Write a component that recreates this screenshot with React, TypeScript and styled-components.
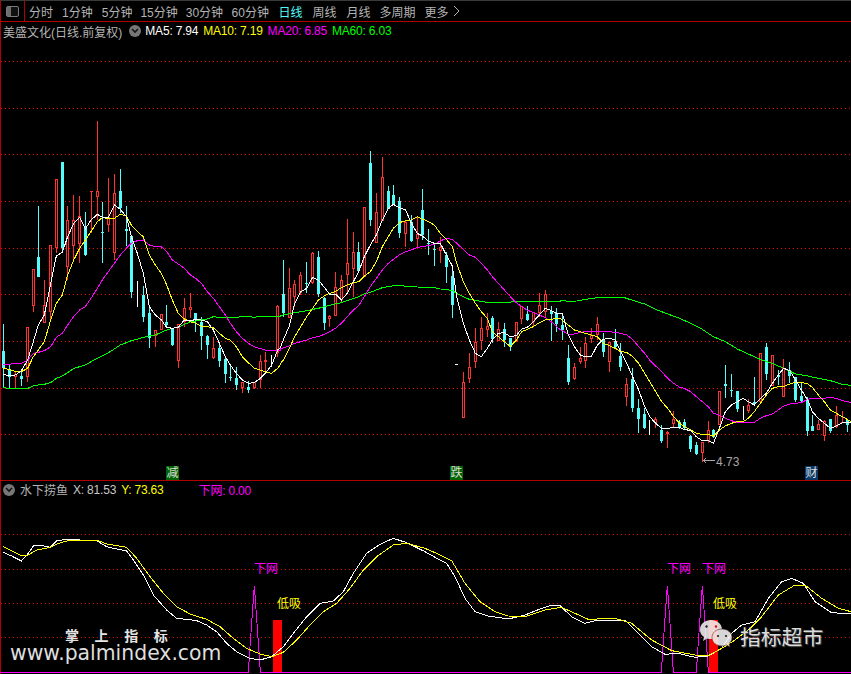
import styled, { createGlobalStyle } from "styled-components";

const GlobalStyle = createGlobalStyle`
  html, body {
    margin: 0;
    background: #000;
  }
`;

const UI_FONT = `"Liberation Sans", "Noto Sans CJK SC", sans-serif`;

const Page = styled.div`
  position: relative;
  display: flex;
  flex-direction: column;
  width: 851px;
  height: 674px;
  overflow: hidden;
  background: #000;
  box-shadow: inset 1px 0 0 #b00000;
  font-family: ${UI_FONT};
  font-size: 12px;
`;

const Toolbar = styled.div`
  display: flex;
  align-items: center;
  flex: none;
  height: 21px;
  box-sizing: border-box;
  border-top: 1px solid #3a3a3a;
  color: #b4b4b4;
`;

const ToggleCell = styled.div`
  display: flex;
  align-items: center;
  justify-content: center;
  width: 24px;
  height: 100%;
  border-right: 1px solid #b00000;
`;

const ToggleIcon = styled.span`
  display: block;
  width: 11px;
  height: 9px;
  border: 1px solid #7c7c7c;
  border-radius: 2px;
  background: linear-gradient(90deg, #6e6e6e 0 4px, #111 4px);
`;

const PeriodList = styled.div`
  display: flex;
  align-items: center;
  margin-left: 4px;
`;

const Period = styled.span<{ $active?: boolean; $gap: number }>`
  color: ${(p) => (p.$active ? "#54fcfc" : "#b4b4b4")};
  margin-left: ${(p) => p.$gap}px;
  white-space: nowrap;
`;

const MoreArrow = styled.svg`
  display: block;
  margin-left: 4px;
`;

const Panel = styled.section<{ $height: number }>`
  position: relative;
  flex: none;
  height: ${(p) => p.$height}px;
`;

const MainPanel = styled(Panel)`
  border-top: 1px solid #b00000;
  border-bottom: 1px solid #b00000;
`;

const LegendRow = styled.div<{ $height: number }>`
  display: flex;
  align-items: center;
  gap: 5px;
  height: ${(p) => p.$height}px;
  padding-left: 3px;
  white-space: nowrap;
`;

const LegendName = styled.span`
  color: #b4b4b4;
`;

const LegendValue = styled.span<{ $color: string; $gap?: number }>`
  color: ${(p) => p.$color};
  margin-left: ${(p) => p.$gap ?? 0}px;
  letter-spacing: -0.2px;
`;

const DropDot = styled.span<{ $gap?: number }>`
  display: inline-flex;
  align-items: center;
  justify-content: center;
  width: 12px;
  height: 12px;
  flex: none;
  border-radius: 50%;
  background: #777;
  color: #111;
  margin-left: ${(p) => p.$gap ?? 0}px;
`;

const Chart = styled.svg<{ $height: number }>`
  display: block;
  width: 851px;
  height: ${(p) => p.$height}px;
`;

const Grid = styled.line<{ $dim?: boolean }>`
  stroke: ${(p) => (p.$dim ? "#e00000" : "#ff0000")};
  stroke-width: 1;
  stroke-dasharray: 1 3;
  shape-rendering: crispEdges;
`;

const Curve = styled.polyline<{ $color: string }>`
  fill: none;
  stroke: ${(p) => p.$color};
  stroke-width: 1;
  shape-rendering: crispEdges;
`;

const Tag = styled.span<{ $x: number; $bg: string }>`
  position: absolute;
  left: ${(p) => p.$x}px;
  bottom: 0;
  width: 13px;
  height: 14px;
  line-height: 14px;
  text-align: center;
  background: ${(p) => p.$bg};
  color: #ddd;
`;

const Note = styled.span<{ $x: number; $y: number; $color: string }>`
  position: absolute;
  left: ${(p) => p.$x}px;
  top: ${(p) => p.$y}px;
  color: ${(p) => p.$color};
  line-height: 14px;
  white-space: nowrap;
`;

const PalmTitle = styled.div`
  position: absolute;
  left: 65px;
  top: 628px;
  color: #e4e4e4;
  font-family: "Noto Sans CJK SC", sans-serif;
  font-size: 14px;
  font-weight: 700;
  line-height: 14px;
  letter-spacing: 15.6px;
  white-space: nowrap;
`;

const PalmUrl = styled.div`
  position: absolute;
  left: 10px;
  top: 643px;
  color: #dedede;
  font-family: "DejaVu Sans", sans-serif;
  font-size: 20.4px;
  line-height: 20px;
  white-space: nowrap;
`;

const ShopMark = styled.div`
  position: absolute;
  left: 699px;
  top: 620px;
  display: flex;
  align-items: center;
  gap: 5px;
  height: 32px;
`;

const ShopName = styled.span`
  color: #dcdcdc;
  font-family: "Noto Sans CJK SC", sans-serif;
  font-size: 20.8px;
  line-height: 28px;
  text-shadow: 1px 1px 1px #555;
  white-space: nowrap;
`;

type Pt = [number, number];
type Kind = "r" | "c" | "w";
// x, high, body top, body bottom, low, in 3x crop coordinates
type Bar = [number, number, number, number, number, Kind];

const crop = (ox: number, oy: number, pts: Pt[]): string =>
  pts.map(([x, y]) => `${ox + x / 3},${oy + y / 3}`).join(" ");

const barsLeft: Bar[] = [
  [10, 612, 692, 745, 805, "c"], [28, 735, 750, 770, 805, "c"], [46, 755, 762, 770, 808, "r"],
  [64, 755, 768, 777, 798, "c"], [83, 620, 622, 772, 785, "r"], [100, 447, 448, 557, 575, "r"],
  [115, 258, 410, 470, 470, "c"], [133, 480, 555, 608, 608, "r"], [152, 375, 376, 577, 605, "r"],
  [169, 178, 178, 385, 400, "r"], [187, 126, 126, 385, 395, "c"], [203, 258, 300, 440, 480, "r"],
  [221, 225, 300, 377, 420, "r"], [239, 228, 287, 372, 428, "r"], [256, 276, 325, 405, 407, "c"],
  [273, 213, 213, 215, 340, "r"], [292, 3, 213, 230, 300, "r"], [307, 245, 337, 339, 430, "c"],
  [325, 175, 290, 314, 335, "r"], [343, 163, 220, 398, 420, "r"], [361, 148, 212, 265, 280, "c"],
  [379, 258, 327, 332, 378, "c"], [394, 347, 347, 515, 535, "c"], [412, 483, -1, -1, 560, "w"],
  [430, 498, 525, 590, 605, "c"], [448, 565, 578, 653, 683, "c"], [466, 630, 630, 647, 680, "r"],
  [484, 582, 583, 630, 630, "r"], [500, 555, 605, 615, 625, "c"], [517, 625, 628, 675, 678, "c"],
  [535, 612, 612, 722, 745, "r"], [553, 533, 565, 605, 620, "r"], [571, 518, 561, 569, 595, "r"],
  [587, 578, 578, 600, 635, "c"], [604, 592, 605, 648, 690, "c"], [622, 645, 648, 675, 717, "c"],
  [640, 650, 684, 715, 717, "r"], [658, 670, 684, 722, 740, "c"], [676, 715, 717, 762, 788, "c"],
  [691, 735, 771, 774, 783, "c"], [709, 740, 773, 795, 810, "c"], [727, 787, 787, 805, 820, "r"],
  [745, 782, 800, 810, 820, "c"], [763, 785, 787, 805, 808, "r"], [781, 705, 722, 780, 803, "r"],
  [796, 695, 720, 725, 760, "r"], [815, 705, -1, -1, 740, "w"], [833, 555, 557, 700, 710, "r"],
];

const barsMiddle: Bar[] = [
  [10, 360, 462, 520, 530, "c"], [28, 385, 445, 535, 535, "r"], [44, 420, 433, 472, 500, "r"],
  [62, 397, 405, 460, 465, "r"], [80, 365, 430, 432, 460, "c"], [98, 337, 340, 430, 432, "r"],
  [115, 332, 352, 462, 470, "c"], [133, 470, 475, 548, 570, "c"], [149, 525, 528, 536, 560, "r"],
  [166, 397, 440, 527, 527, "r"], [184, 405, 420, 480, 490, "r"], [202, 237, 370, 405, 455, "r"],
  [220, 277, 337, 388, 470, "r"], [236, 305, 337, 392, 395, "c"], [253, 202, 202, 410, 410, "r"],
  [271, 33, 70, 240, 258, "c"], [289, 160, 217, 310, 310, "r"], [307, 52, 112, 242, 243, "r"],
  [325, 137, 153, 206, 208, "c"], [340, 135, 165, 195, 195, "c"], [358, 170, 183, 278, 295, "c"],
  [377, 240, 247, 281, 320, "r"], [394, 225, 247, 302, 307, "c"], [412, 230, 283, 298, 320, "r"],
  [427, 148, 210, 285, 300, "c"], [445, 268, 310, 312, 345, "c"], [463, 315, 326, 328, 378, "c"],
  [481, 290, 322, 334, 370, "r"], [499, 335, 345, 380, 430, "c"], [517, 378, 408, 495, 533, "c"],
  [530, 672, 672, 674, 674, "w"], [550, 695, 725, 835, 835, "r"], [568, 640, 680, 717, 728, "r"],
  [586, 565, 606, 665, 683, "r"], [604, 532, 565, 602, 630, "r"], [622, 520, 557, 570, 592, "r"],
  [637, 528, 535, 598, 608, "c"], [655, 545, 568, 603, 603, "r"], [673, 550, 568, 600, 620, "c"],
  [691, 595, 595, 620, 632, "c"], [709, 547, 547, 602, 605, "r"], [725, 498, 498, 537, 552, "r"],
  [742, 498, 522, 540, 542, "c"], [760, 517, 517, 545, 560, "r"], [778, 460, 495, 518, 530, "r"],
  [796, 450, 462, 515, 530, "r"], [814, 498, 512, 522, 603, "c"], [830, 505, 520, 552, 575, "c"],
];

const barsRight: Bar[] = [
  [7, 100, 135, 150, 180, "c"], [25, 195, 235, 305, 315, "c"], [43, 250, 262, 296, 300, "r"],
  [61, 202, 235, 245, 252, "r"], [76, 172, 190, 242, 265, "r"], [94, 145, 165, 178, 190, "r"],
  [112, 112, 133, 165, 180, "r"], [130, 160, 178, 215, 230, "c"], [148, 185, 187, 245, 275, "r"],
  [166, 148, 182, 200, 205, "c"], [182, 190, 228, 262, 272, "c"], [200, 293, 313, 350, 378, "r"],
  [218, 265, 297, 385, 395, "c"], [236, 358, 385, 417, 458, "c"], [254, 385, 402, 443, 448, "c"],
  [269, 420, -1, -1, 465, "w"], [287, 412, 418, 430, 445, "r"], [305, 435, 450, 483, 488, "c"],
  [323, 452, 456, 461, 503, "r"], [341, 393, 418, 432, 445, "r"], [359, 420, 425, 445, 447, "c"],
  [373, 418, 426, 443, 447, "c"], [392, 465, 468, 507, 515, "c"], [409, 485, 495, 522, 525, "c"],
  [427, 485, 485, 520, 545, "r"], [445, 422, 450, 484, 490, "r"], [460, 447, 450, 472, 475, "c"],
  [478, 333, 333, 435, 435, "r"], [496, 255, 312, 318, 355, "c"], [514, 282, 330, 332, 352, "c"],
  [532, 333, 333, 388, 395, "c"], [550, 378, -1, -1, 420, "w"], [565, 358, 375, 393, 398, "r"],
  [583, 292, 365, 372, 378, "c"], [601, 220, 220, 365, 365, "r"], [619, 190, 202, 282, 300, "c"],
  [637, 225, 225, 318, 318, "r"], [655, 270, 285, 290, 315, "c"], [671, 238, 265, 350, 350, "r"],
  [689, 245, 270, 287, 310, "c"], [707, 290, 292, 360, 365, "c"], [724, 310, 348, 362, 365, "c"],
  [743, 350, 360, 453, 467, "c"], [757, 405, 438, 453, 453, "c"], [775, 420, 432, 449, 450, "r"],
  [793, 420, 423, 467, 483, "r"], [811, 418, 418, 452, 458, "c"], [829, 378, 405, 440, 445, "r"],
  [847, 393, 425, 430, 430, "r"], [863, 420, 420, 435, 455, "c"],
];

const ma5 = [
  crop(0, 120, [[10,763],[28,767],[46,765],[64,752],[83,720],[100,665],[115,615],[133,585],[152,490],[169,408],[187,397],[203,350],[221,310],[239,293],[256,327],[273,300],[292,283],[307,292],[325,292],[343,255],[361,268],[379,290],[394,350],[412,400],[430,460],[448,560],[466,585],[484,600],[500,622],[517,625],[535,622],[553,600],[571,603],[587,598],[604,600],[622,605],[640,630],[658,670],[676,710],[691,735],[709,760],[727,780],[745,790],[763,788],[781,775],[796,760],[815,735],[833,690]]),
  crop(280, 140, [[0,625],[10,600],[28,558],[44,490],[62,455],[80,445],[98,412],[115,420],[133,442],[149,462],[166,462],[184,480],[202,460],[220,425],[236,395],[253,350],[271,315],[289,285],[307,240],[325,205],[340,193],[358,203],[377,210],[394,250],[412,280],[427,288],[445,303],[463,310],[481,310],[499,345],[517,378],[530,470],[550,550],[568,600],[586,640],[604,650],[622,625],[637,600],[655,580],[673,578],[691,590],[709,587],[725,567],[742,562],[760,545],[778,525],[796,505],[814,512],[830,520]]),
  crop(560, 280, [[0,100],[7,100],[25,165],[43,200],[61,225],[76,230],[94,230],[112,195],[130,178],[148,175],[166,180],[182,215],[200,250],[218,290],[236,330],[254,380],[269,410],[287,430],[305,445],[323,445],[341,442],[359,443],[373,448],[392,452],[409,470],[427,482],[445,482],[460,490],[478,445],[496,395],[514,375],[532,365],[550,355],[565,365],[583,375],[601,355],[619,340],[637,310],[655,285],[671,265],[689,272],[707,300],[724,330],[743,360],[757,395],[775,415],[793,430],[811,445],[829,438],[847,428],[873,428]]),
].join(" ");

const ma10 = [
  crop(0, 120, [[10,745],[28,748],[46,755],[64,755],[83,745],[100,710],[115,690],[133,665],[152,600],[169,550],[187,525],[203,465],[221,420],[239,385],[256,360],[273,335],[292,305],[307,293],[325,295],[343,295],[361,283],[379,287],[394,315],[412,335],[430,350],[448,405],[466,435],[484,460],[500,495],[517,540],[535,580],[553,597],[571,605],[587,610],[604,618],[622,620],[640,623],[658,640],[676,655],[691,660],[709,680],[727,710],[745,728],[763,745],[781,750],[796,755],[815,760],[833,745],[840,735]]),
  crop(280, 140, [[0,672],[10,660],[28,625],[44,590],[62,560],[80,530],[98,505],[115,480],[133,468],[149,460],[166,455],[184,443],[202,435],[220,428],[236,425],[253,408],[271,395],[289,365],[307,320],[325,290],[340,265],[358,248],[377,242],[394,240],[412,230],[427,237],[445,245],[463,255],[481,280],[499,298],[517,320],[530,370],[550,425],[568,460],[586,490],[604,515],[622,535],[637,575],[655,590],[673,605],[691,620],[709,600],[725,575],[742,568],[760,560],[778,548],[796,540],[814,538],[830,535]]),
  crop(560, 280, [[0,115],[25,135],[43,150],[61,155],[76,160],[94,165],[112,170],[130,190],[148,197],[166,205],[182,215],[200,217],[218,230],[236,250],[254,280],[269,305],[287,335],[305,365],[323,385],[341,410],[359,430],[373,440],[392,450],[409,460],[427,463],[445,463],[460,468],[478,450],[496,438],[514,430],[532,425],[550,425],[565,415],[583,395],[601,370],[619,345],[637,325],[655,320],[671,320],[689,312],[707,307],[724,307],[743,312],[757,322],[775,345],[793,365],[811,390],[829,400],[847,410],[873,425]]),
].join(" ");

const ma20 = [
  crop(0, 120, [[10,735],[28,733],[46,730],[64,730],[83,720],[100,700],[115,697],[133,692],[152,680],[169,652],[187,640],[203,615],[221,590],[239,570],[256,560],[273,535],[292,505],[307,480],[325,455],[343,430],[361,405],[379,385],[394,370],[412,362],[430,360],[448,375],[466,380],[484,380],[500,395],[517,420],[535,432],[553,445],[571,465],[587,475],[604,490],[622,515],[640,535],[658,560],[676,585],[691,610],[709,635],[727,655],[745,670],[763,680],[781,686],[796,690],[815,690],[840,690]]),
  crop(280, 140, [[0,627],[28,618],[44,610],[62,605],[80,600],[98,593],[115,590],[133,583],[149,575],[166,565],[184,550],[202,530],[220,510],[236,497],[253,470],[271,440],[289,415],[307,390],[325,370],[340,358],[358,345],[377,335],[394,330],[412,322],[427,320],[445,317],[463,313],[481,303],[499,295],[517,298],[530,310],[550,328],[568,345],[586,352],[604,370],[622,390],[637,410],[655,430],[673,450],[691,470],[709,488],[725,500],[742,510],[760,518],[778,525],[796,533],[814,545],[830,560]]),
  crop(560, 280, [[0,148],[25,163],[43,162],[61,157],[76,155],[94,155],[112,155],[130,155],[148,155],[166,157],[182,160],[200,165],[218,178],[236,200],[254,220],[269,240],[287,258],[305,275],[323,295],[341,310],[359,322],[373,325],[392,335],[409,350],[427,365],[445,380],[460,400],[478,405],[496,415],[514,422],[532,427],[550,427],[565,428],[583,427],[601,415],[619,407],[637,402],[655,390],[671,378],[689,372],[707,370],[724,368],[743,358],[757,355],[775,355],[793,355],[811,352],[829,355],[847,362],[873,367]]),
].join(" ");

const ma60 = [
  crop(0, 120, [[10,803],[28,805],[64,805],[83,805],[100,798],[115,795],[133,793],[152,788],[169,775],[187,768],[203,758],[221,745],[239,740],[256,735],[273,725],[292,715],[307,708],[325,698],[343,687],[361,675],[379,668],[394,662],[412,658],[430,652],[448,648],[466,645],[484,637],[500,630],[517,625],[535,622],[553,613],[571,606],[587,603],[604,600],[622,597],[640,590],[658,592],[676,592],[691,592],[709,592],[727,590],[745,589],[763,592],[781,589],[796,589],[840,589]]),
  crop(280, 140, [[0,527],[44,518],[62,515],[80,512],[98,508],[115,505],[133,500],[149,496],[166,492],[184,488],[202,482],[220,476],[236,470],[253,462],[271,457],[289,450],[307,443],[325,440],[340,437],[358,436],[377,439],[394,439],[412,441],[445,442],[463,443],[481,447],[499,448],[517,452],[530,460],[550,470],[568,478],[586,481],[604,484],[622,487],[840,484]]),
  crop(560, 280, [[0,60],[25,64],[50,63],[76,58],[112,53],[148,52],[190,52],[215,60],[254,72],[287,88],[323,102],[359,115],[392,130],[427,148],[460,170],[496,185],[532,207],[565,222],[601,238],[637,250],[671,265],[707,282],[743,288],[775,295],[811,302],[847,313],[873,316]]),
].join(" ");

const lineX = [
  crop(0, 470, [[10,247],[35,258],[64,273],[85,250],[100,228],[120,225],[150,232],[170,212],[200,208],[240,210],[290,212],[320,230],[350,237],[380,243],[400,270],[430,315],[460,375],[500,420],[530,445],[560,448],[590,452],[620,465],[650,485],[680,520],[710,545],[750,565],[780,570],[815,560],[850,530],[880,490],[920,440],[960,400],[1000,393],[1030,365],[1060,310],[1100,250],[1140,223],[1180,205],[1220,218],[1275,245]]),
  crop(425, 470, [[0,245],[30,262],[65,280],[90,320],[120,385],[150,425],[190,438],[250,447],[300,435],[350,415],[375,407],[405,407],[440,440],[480,460],[520,450],[600,450],[640,490],[680,530],[720,553],[760,550],[810,562],[850,558],[890,535],[920,490],[950,465],[990,455],[1030,385],[1070,335],[1100,325],[1135,340],[1170,395],[1220,428],[1278,432]]),
].join(" ");

const lineY = [
  crop(0, 470, [[10,230],[35,243],[64,257],[85,255],[110,240],[150,232],[170,222],[200,213],[240,210],[290,210],[320,222],[380,232],[410,265],[450,320],[490,370],[530,410],[570,432],[620,448],[660,470],[700,505],[740,535],[780,552],[815,560],[850,547],[890,510],[930,465],[970,425],[1010,400],[1050,355],[1090,300],[1130,260],[1180,225],[1220,220],[1275,235]]),
  crop(425, 470, [[0,235],[30,248],[80,272],[120,340],[165,395],[210,425],[250,438],[300,440],[360,420],[410,412],[450,430],[490,448],[570,445],[620,460],[680,510],[740,542],[810,555],[850,557],[890,535],[930,510],[970,480],[1010,440],[1060,375],[1110,345],[1140,345],[1190,385],[1240,415],[1278,425]]),
].join(" ");

const spike = (cx: number): Pt[] => [
  [cx - 18, 607], [cx - 13, 530], [cx - 8, 460], [cx - 3, 390], [cx, 348],
  [cx + 3, 390], [cx + 8, 460], [cx + 13, 530], [cx + 18, 607],
];

const netLine = [
  crop(0, 470, [[0,607],...spike(763),[1275,607]]),
  crop(425, 470, [...spike(727),...spike(832),[1278,607]]),
].join(" ");

const mainGridYs = [61, 108, 154, 201, 248, 294, 341, 388, 434];
const subGridYs = [534, 569, 603, 637];

const Candle = ({ ox, oy, bar }: { ox: number; oy: number; bar: Bar }) => {
  const [zx, hi, top, bot, lo, kind] = bar;
  const c = Math.round(ox + zx / 3 - 0.5);
  const y = (v: number) => Math.round(oy + v / 3);
  const color = kind === "r" ? "#ff3232" : kind === "c" ? "#54fcfc" : "#ffffff";
  const wick = <rect x={c} y={y(hi)} width={1} height={Math.max(1, y(lo) - y(hi))} fill={color} />;
  if (top < 0) return wick;
  const h = Math.max(1, y(bot) - y(top));
  return (
    <>
      {wick}
      {kind === "r" && h > 2 ? (
        <rect x={c - 0.5} y={y(top) + 0.5} width={2} height={h - 1} fill="#000" stroke={color} />
      ) : (
        <rect x={c - 1} y={y(top)} width={3} height={h} fill={color} />
      )}
    </>
  );
};

const MainChart = () => (
  <Chart $height={440} viewBox="0 40 851 440" shapeRendering="crispEdges">
    {mainGridYs.map((y) => (
      <Grid key={y} x1={1} x2={851} y1={y + 0.5} y2={y + 0.5} />
    ))}
    {barsLeft.map((b, i) => <Candle key={`l${i}`} ox={0} oy={120} bar={b} />)}
    {barsMiddle.map((b, i) => <Candle key={`m${i}`} ox={280} oy={140} bar={b} />)}
    {barsRight.map((b, i) => <Candle key={`r${i}`} ox={560} oy={280} bar={b} />)}
    <Curve $color="#00ff00" points={ma60} />
    <Curve $color="#ff00ff" points={ma20} />
    <Curve $color="#ffff00" points={ma10} />
    <Curve $color="#ffffff" points={ma5} />
    <path d="M703 460.5h12M703 460.5l3-2M703 460.5l3 2" fill="none" stroke="#aaa" />
  </Chart>
);

const SubChart = () => (
  <Chart $height={176} viewBox="0 498 851 176" shapeRendering="crispEdges">
    {subGridYs.map((y) => (
      <Grid key={y} $dim x1={1} x2={851} y1={y + 0.5} y2={y + 0.5} />
    ))}
    <rect x={273} y={620} width={9} height={52} fill="#ff0000" />
    <rect x={709} y={620} width={9} height={52} fill="#ff0000" />
    <Curve $color="#ff00ff" points={netLine} />
    <Curve $color="#ffffff" points={lineX} />
    <Curve $color="#ffff00" points={lineY} />
  </Chart>
);

const Chevron = () => (
  <svg width="8" height="6" viewBox="0 0 8 6">
    <path d="M1 1l3 3 3-3" fill="none" stroke="#151515" strokeWidth="1.6" />
  </svg>
);

const WeChatIcon = () => (
  <svg width="36" height="32" viewBox="0 0 36 32">
    <g opacity="0.88">
      <path d="M12 0C18 0 23 4 23 9.500C23 15 18 19 12 19C10.500 19 9.500 19 8 18.500L4 21L5 17C2 15 1 12.500 1 9.500C1 4 6 0 12 0Z" fill="#f2f2f2" />
      <circle cx="7.500" cy="6.500" r="1.200" fill="#222" />
      <circle cx="17" cy="6.500" r="1.200" fill="#d01010" />
      <path d="M23 9C28.500 9 33 12.500 33 17.500C33 20 32 22 30 23.500L31 27L27.500 25C26 25.500 24.500 26 23 26C17.500 26 13 22.500 13 17.500C13 12.500 17.500 9 23 9Z" fill="#f4f4f4" stroke="#5a2a2a" strokeWidth="0.6" />
      <circle cx="19" cy="16" r="1.100" fill="#222" />
      <circle cx="27" cy="16" r="1.100" fill="#222" />
    </g>
  </svg>
);

const periods = [
  { label: "分时", gap: 0 },
  { label: "1分钟", gap: 9 },
  { label: "5分钟", gap: 9 },
  { label: "15分钟", gap: 8 },
  { label: "30分钟", gap: 8 },
  { label: "60分钟", gap: 8.5 },
  { label: "日线", gap: 9.5 },
  { label: "周线", gap: 10 },
  { label: "月线", gap: 10 },
  { label: "多周期", gap: 9 },
  { label: "更多", gap: 9 },
];

const App = () => {
  return (
    <Page>
      <GlobalStyle />
      <Toolbar>
        <ToggleCell>
          <ToggleIcon />
        </ToggleCell>
        <PeriodList>
          {periods.map((p) => (
            <Period key={p.label} $gap={p.gap} $active={p.label === "日线"}>{p.label}</Period>
          ))}
          <MoreArrow width="7" height="12" viewBox="0 0 7 12">
            <path d="M1 1l5 5-5 5" fill="none" stroke="#b4b4b4" />
          </MoreArrow>
        </PeriodList>
      </Toolbar>
      <MainPanel $height={458}>
        <LegendRow $height={18}>
          <LegendName>美盛文化(日线.前复权)</LegendName>
          <DropDot $gap={2}><Chevron /></DropDot>
          <LegendValue $color="#ffffff" $gap={-1}>MA5: 7.94</LegendValue>
          <LegendValue $color="#ffff00">MA10: 7.19</LegendValue>
          <LegendValue $color="#ff00ff">MA20: 6.85</LegendValue>
          <LegendValue $color="#00ff00">MA60: 6.03</LegendValue>
        </LegendRow>
        <MainChart />
        <Note $x={716} $y={433} $color="#a8a8a8">4.73</Note>
        <Tag $x={166} $bg="#006400">减</Tag>
        <Tag $x={450} $bg="#006400">跌</Tag>
        <Tag $x={805} $bg="#0a3a6a">财</Tag>
      </MainPanel>
      <Panel $height={193}>
        <LegendRow $height={17}>
          <DropDot><Chevron /></DropDot>
          <LegendName>水下捞鱼</LegendName>
          <LegendValue $color="#c8c8c8">X: 81.53</LegendValue>
          <LegendValue $color="#ffff00">Y: 73.63</LegendValue>
          <LegendValue $color="#ff00ff" $gap={30}>下网: 0.00</LegendValue>
        </LegendRow>
        <SubChart />
        <Note $x={254} $y={81} $color="#ff00ff">下网</Note>
        <Note $x={277} $y={116} $color="#ffff00">低吸</Note>
        <Note $x={667} $y={81} $color="#ff00ff">下网</Note>
        <Note $x={702} $y={81} $color="#ff00ff">下网</Note>
        <Note $x={713} $y={116} $color="#ffff00">低吸</Note>
      </Panel>
      <PalmTitle>掌上指标</PalmTitle>
      <PalmUrl>www.palmindex.com</PalmUrl>
      <ShopMark>
        <WeChatIcon />
        <ShopName>指标超市</ShopName>
      </ShopMark>
    </Page>
  );
};

export default App;
